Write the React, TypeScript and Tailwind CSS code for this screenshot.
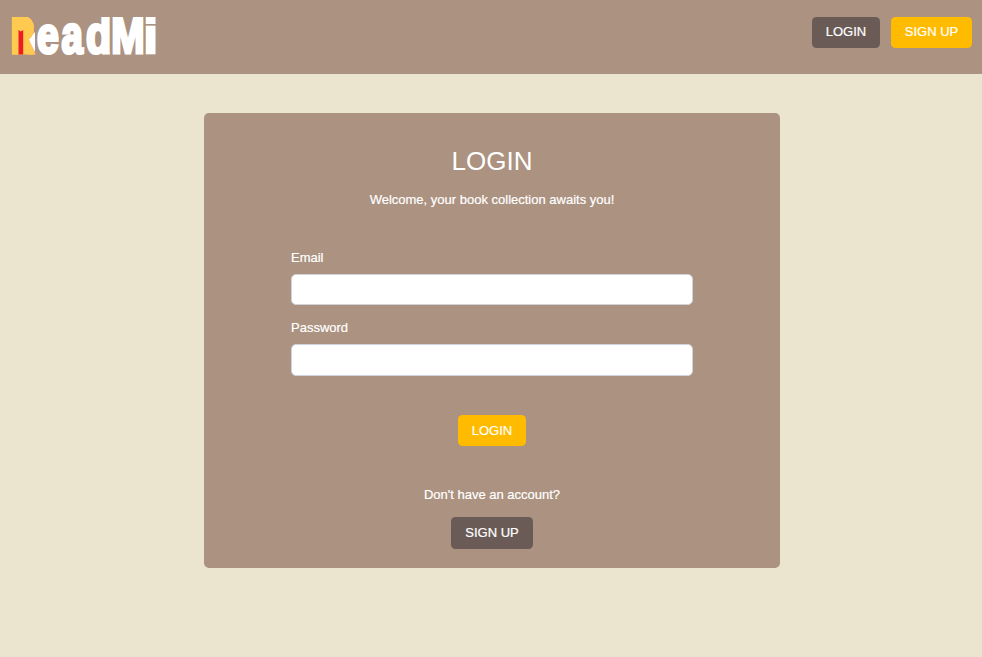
import React from "react";

type GlyphProps = { ch: string; x: number; y: number; sx: number; sy: number };

function Glyph({ ch, x, y, sx, sy }: GlyphProps) {
  return (
    <text
      transform={`translate(${x} ${y}) scale(${sx} ${sy})`}
      fontSize="40"
      className="font-['Liberation_Sans',Arial,sans-serif] font-bold"
    >
      {ch}
    </text>
  );
}

function Logo() {
  return (
    <svg
      width="160"
      height="74"
      viewBox="0 0 160 74"
      className="block overflow-visible"
      role="img"
      aria-label="ReadMi"
    >
      <clipPath id="wordmark">
        <rect x="0" y="17" width="160" height="38.3" />
      </clipPath>
      <g clipPath="url(#wordmark)">
        <path d="M28 39 L35 32 V52 Z" fill="#fff" />
        <path d="M12 17 H24 Q34 18 34 28 Q34 36 29 39 L33 54.5 H12 Z" fill="#ffca4f" />
        <g fill="#ffca4f" stroke="#ffca4f" strokeWidth="2.5">
          <Glyph ch="R" x={10.8} y={52.9} sx={0.81} sy={1.25} />
        </g>
        <path d="M18.5 30 L20.8 31.5 L23.2 30 V54.5 H18.5 Z" fill="#ed1c24" />
        <g fill="#fff" stroke="#fff" strokeWidth="2.5">
          <Glyph ch="e" x={37} y={52.9} sx={0.98} sy={1.3} />
          <Glyph ch="a" x={61.6} y={52.9} sx={0.96} sy={1.3} />
          <Glyph ch="d" x={86} y={52.9} sx={1.03} sy={1.29} />
          <Glyph ch="M" x={111.2} y={52.9} sx={1} sy={1.25} />
        </g>
        <g fill="#fff" stroke="#fff" strokeWidth="2">
          <Glyph ch="i" x={143.6} y={53.2} sx={1.29} sy={1.21} />
        </g>
      </g>
    </svg>
  );
}

type ButtonProps = { label: string; className: string };

function Button({ label, className }: ButtonProps) {
  return (
    <button type="button" className={`block rounded-[4.5px] text-center leading-[19px] ${className}`}>
      {label}
    </button>
  );
}

function Field({ label, type, className }: { label: string; type: string; className: string }) {
  return (
    <label className="block">
      <span className="block leading-[19px]">{label}</span>
      <input
        type={type}
        className={`mt-[7px] block w-full rounded-[5px] border border-[#ced4da] bg-white px-2.5 text-black ${className}`}
      />
    </label>
  );
}

export default function App() {
  return (
    <div className="h-[657px] overflow-hidden bg-[#ebe5d0] font-['Liberation_Sans',Arial,sans-serif] text-[13px] text-white [-webkit-text-stroke:0.2px]">
      <header className="flex h-[74px] items-start justify-between bg-[#ac9280] pr-[10px]">
        <Logo />
        <nav className="flex gap-[11px] pt-[17px]">
          <Button label="LOGIN" className="h-[31px] w-[68px] bg-[#6b5b56] pb-[2px]" />
          <Button label="SIGN UP" className="h-[31px] w-[81px] bg-[#ffbb00] pb-[2px]" />
        </nav>
      </header>
      <main className="mt-[39px] ml-[204px] flex h-[455px] w-[576px] flex-col items-center rounded-[5px] bg-[#ac9280]">
        <h1 className="mt-8 text-[26px] leading-8 [-webkit-text-stroke:0px]">LOGIN</h1>
        <p className="mt-[13px] leading-[19px]">Welcome, your book collection awaits you!</p>
        <form className="mt-[39px] flex w-[402px] flex-col gap-[13px]">
          <Field label="Email" type="email" className="h-[31px]" />
          <Field label="Password" type="password" className="h-[32px]" />
        </form>
        <Button label="LOGIN" className="mt-[39px] h-[31px] w-[68px] bg-[#ffbb00]" />
        <p className="mt-[39px] leading-[19px]">Don't have an account?</p>
        <Button label="SIGN UP" className="mt-[13px] h-[32px] w-[82px] bg-[#6b5b56] pb-[2px]" />
      </main>
    </div>
  );
}
